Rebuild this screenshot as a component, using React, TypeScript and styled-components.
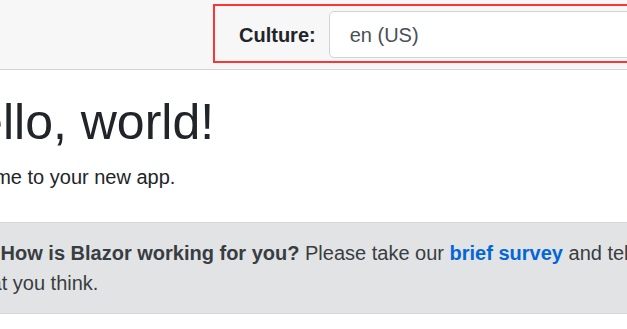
import React from "react"
import styled, { createGlobalStyle } from "styled-components"

const GlobalStyle = createGlobalStyle`
  html, body {
    margin: 0;
    padding: 0;
    overflow: hidden;
    background: #fff;
  }

  body {
    font-family: "Liberation Sans", Arial, sans-serif;
    font-size: 20px;
    line-height: 1.5;
    color: #212529;
  }

  *, *::before, *::after {
    box-sizing: border-box;
  }
`

const Page = styled.div`
  display: flex;
  flex-direction: column;
  width: 627px;
  height: 329px;
`

const TopRow = styled.header`
  display: flex;
  align-items: flex-start;
  flex: 0 0 70px;
  padding: 4px 0 0 213px;
  background: #f7f7f7;
  border-bottom: 1px solid #d6d5d5;
`

const CultureForm = styled.form`
  display: flex;
  align-items: center;
  flex: 0 0 auto;
  gap: 13px;
  width: 520px;
  height: 59px;
  margin: 0;
  padding: 5px 0 3px 24px;
  border: 2px solid #f33;
`

const Label = styled.label`
  font-weight: 700;
  line-height: 30px;
  color: #212529;
`

const Select = styled.select`
  appearance: none;
  width: 320px;
  height: 47px;
  padding: 0 20px;
  font-family: inherit;
  font-size: 20px;
  color: #495057;
  background: #fff;
  border: 1px solid #ced4da;
  border-radius: 5px;
  outline: none;
`

const Content = styled.main`
  width: 770px;
  margin-left: -61px;
  padding-top: 22px;
`

const Title = styled.h1`
  margin: 0 0 10px;
  font-size: 50px;
  font-weight: 500;
  line-height: 1.2;
`

const Lead = styled.p`
  margin: 0 0 20px;
`

const Alert = styled.div`
  margin-top: 30px;
  padding: 15px 25px;
  color: #383d41;
  background: #e2e3e5;
  border: 1px solid #d6d8db;
  border-radius: 5px;
`

const PencilIcon = styled.span`
  display: inline-block;
  width: 20px;
  height: 20px;
  margin-right: 10px;
  vertical-align: -2px;

  svg {
    display: block;
    width: 20px;
    height: 20px;
  }
`

const SurveyLink = styled.a`
  font-weight: 700;
  color: #0366d6;
  text-decoration: none;
`

const App = (): JSX.Element => (
  <>
    <GlobalStyle />
    <Page>
      <TopRow>
        <CultureForm>
          <Label htmlFor="culture">Culture:</Label>
          <Select id="culture" defaultValue="en-US">
            <option value="en-US">en (US)</option>
            <option value="fr-FR">fr (FR)</option>
          </Select>
        </CultureForm>
      </TopRow>
      <Content>
        <Title>Hello, world!</Title>
        <Lead>Welcome to your new app.</Lead>
        <Alert role="alert">
          <PencilIcon aria-hidden="true">
            <svg viewBox="0 0 8 8" fill="#383d41">
              <path d="M6 0L5 1l2 2 1-1-2-2zM4 2L0 6v2h2l4-4-2-2z" />
            </svg>
          </PencilIcon>{" "}
          <strong>How is Blazor working for you?</strong> Please take our{" "}
          <SurveyLink href="#survey">brief survey</SurveyLink> and tell us
          what you think.
        </Alert>
      </Content>
    </Page>
  </>
)

export default App
